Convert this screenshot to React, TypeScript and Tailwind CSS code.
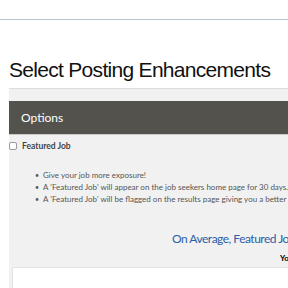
import React from 'react'

const bullets = [
    "Give your job more exposure!",
    "A 'Featured Job' will appear on the job seekers home page for 30 days.",
    "A 'Featured Job' will be flagged on the results page giving you a better chance of being seen.",
]

const App = () => {
    return (
        <div className="w-[288px] h-[288px] overflow-hidden bg-white">
            {/* top nav strip */}
            <div className="h-[20px] border-b border-[#b9c3d6]" />

            <h1 className="mt-[39px] ml-[9px] text-[21px] tracking-[-0.7px] leading-[22px] whitespace-nowrap text-[#111] font-['Liberation_Sans',Arial,sans-serif]">
                Select Posting Enhancements
            </h1>

            <div className="mt-[7px] ml-[9px] w-[640px] border-t border-[#dcdcdc] bg-[#f1f1f1] pt-[12px] font-['Lato',sans-serif]">
                <div className="h-[34px] flex items-center pl-[12px] bg-[#53524d] border-b border-[#c9c9c7]">
                    <span className="text-[12px] text-white leading-none">Options</span>
                </div>

                <label className="mt-[7px] flex items-center gap-[5px] h-[8px]">
                    <span className="w-[8px] h-[8px] bg-white border border-[#9a9a9a] rounded-[2px]" />
                    <span className="text-[8.5px] font-bold text-[#444] leading-none">Featured Job</span>
                </label>

                <ul className="mt-[19px] pl-[26px]">
                    {bullets.map((b) => (
                        <li key={b} className="flex gap-[4px] h-[12px] items-center text-[8px] text-[#555] whitespace-nowrap">
                            <span className="text-[7px]">•</span>
                            <span>{b}</span>
                        </li>
                    ))}
                </ul>

                <div className="mt-[25px] pl-[163px] h-[18px] leading-[18px] text-[12px] tracking-[-0.5px] text-[#2c5ea8] whitespace-nowrap">
                    On Average, Featured Jobs receive more views
                </div>
                <div className="mt-[5px] pl-[271px] h-[10px] leading-[10px] text-[8px] font-bold text-black whitespace-nowrap">
                    You can choose this option below
                </div>

                <div className="mt-[4px] ml-[3px] h-[40px] bg-white border-t border-l border-[#e2e2e2] pl-[31px] pt-[13px]">
                    <span className="text-[13px] leading-none text-[#a9b9dc]">$ 5</span>
                </div>
            </div>
        </div>
    )
}

export default App
